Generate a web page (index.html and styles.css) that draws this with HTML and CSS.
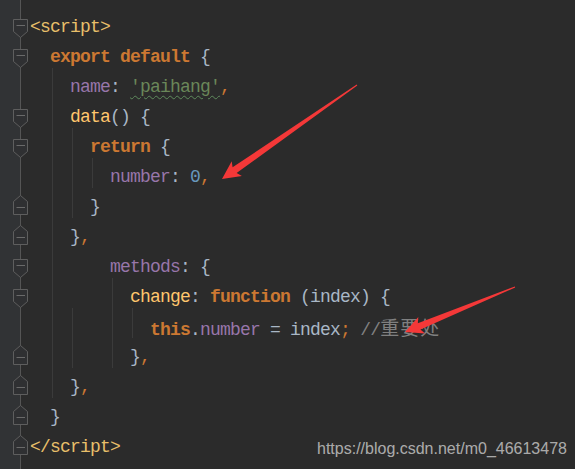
FILE: index.html
```html
<!DOCTYPE html>
<html>
<head>
<meta charset="utf-8">
<link rel="stylesheet" href="styles.css">
</head>
<body>
<div class="editor">
  <div class="gutter">
    <div class="grow"><svg class="fold" viewBox="0 0 30 30"><polygon points="13.5,7.5 27.5,7.5 27.5,19.5 20.5,25.5 13.5,19.5"/><line x1="16.5" y1="13.5" x2="25" y2="13.5"/></svg></div>
    <div class="grow"><svg class="fold" viewBox="0 0 30 30"><polygon points="13.5,7.5 27.5,7.5 27.5,19.5 20.5,25.5 13.5,19.5"/><line x1="16.5" y1="13.5" x2="25" y2="13.5"/></svg></div>
    <div class="grow"></div>
    <div class="grow"><svg class="fold" viewBox="0 0 30 30"><polygon points="13.5,7.5 27.5,7.5 27.5,19.5 20.5,25.5 13.5,19.5"/><line x1="16.5" y1="13.5" x2="25" y2="13.5"/></svg></div>
    <div class="grow"><svg class="fold" viewBox="0 0 30 30"><polygon points="13.5,7.5 27.5,7.5 27.5,19.5 20.5,25.5 13.5,19.5"/><line x1="16.5" y1="13.5" x2="25" y2="13.5"/></svg></div>
    <div class="grow"></div>
    <div class="grow"><svg class="fold" viewBox="0 0 30 30"><polygon points="20.5,3.5 27.5,9.5 27.5,22.5 13.5,22.5 13.5,9.5"/><line x1="16.5" y1="15.5" x2="25" y2="15.5"/></svg></div>
    <div class="grow"><svg class="fold" viewBox="0 0 30 30"><polygon points="20.5,3.5 27.5,9.5 27.5,22.5 13.5,22.5 13.5,9.5"/><line x1="16.5" y1="15.5" x2="25" y2="15.5"/></svg></div>
    <div class="grow"><svg class="fold" viewBox="0 0 30 30"><polygon points="13.5,7.5 27.5,7.5 27.5,19.5 20.5,25.5 13.5,19.5"/><line x1="16.5" y1="13.5" x2="25" y2="13.5"/></svg></div>
    <div class="grow"><svg class="fold" viewBox="0 0 30 30"><polygon points="13.5,7.5 27.5,7.5 27.5,19.5 20.5,25.5 13.5,19.5"/><line x1="16.5" y1="13.5" x2="25" y2="13.5"/></svg></div>
    <div class="grow"></div>
    <div class="grow"><svg class="fold" viewBox="0 0 30 30"><polygon points="20.5,3.5 27.5,9.5 27.5,22.5 13.5,22.5 13.5,9.5"/><line x1="16.5" y1="15.5" x2="25" y2="15.5"/></svg></div>
    <div class="grow"><svg class="fold" viewBox="0 0 30 30"><polygon points="20.5,3.5 27.5,9.5 27.5,22.5 13.5,22.5 13.5,9.5"/><line x1="16.5" y1="15.5" x2="25" y2="15.5"/></svg></div>
    <div class="grow"><svg class="fold" viewBox="0 0 30 30"><polygon points="20.5,3.5 27.5,9.5 27.5,22.5 13.5,22.5 13.5,9.5"/><line x1="16.5" y1="15.5" x2="25" y2="15.5"/></svg></div>
    <div class="grow"><svg class="fold" viewBox="0 0 30 30"><polygon points="20.5,3.5 27.5,9.5 27.5,22.5 13.5,22.5 13.5,9.5"/><line x1="16.5" y1="15.5" x2="25" y2="15.5"/></svg></div>
  </div>
  <div class="code">
    <svg class="guides" width="545" height="469" viewBox="0 0 545 469">
      <line x1="22.5" y1="68" x2="22.5" y2="398"/>
      <line x1="42.5" y1="128" x2="42.5" y2="218"/>
      <line x1="42.5" y1="308" x2="42.5" y2="368"/>
      <line x1="62.5" y1="158" x2="62.5" y2="188"/>
      <line x1="82.5" y1="278" x2="82.5" y2="368"/>
      <line x1="102.5" y1="308" x2="102.5" y2="338"/>
    </svg>
<div class="line"><span class="tag">&lt;script&gt;</span></div>
<div class="line">  <span class="kw">export default</span> <span class="br">{</span></div>
<div class="line">    <span class="prop">name</span><span class="br">: </span><span class="str">'paihang'</span><span class="kw2">,</span></div>
<div class="line">    <span class="fn">data</span><span class="br">() {</span></div>
<div class="line">      <span class="kw">return</span> <span class="br">{</span></div>
<div class="line">        <span class="prop">number</span><span class="br">: </span><span class="num">0</span><span class="kw2">,</span></div>
<div class="line">      <span class="br">}</span></div>
<div class="line">    <span class="br">}</span><span class="kw2">,</span></div>
<div class="line">        <span class="prop">methods</span><span class="br">: {</span></div>
<div class="line">          <span class="fn">change</span><span class="br">: </span><span class="kw">function</span> <span class="br">(index) {</span></div>
<div class="line">            <span class="kw">this</span><span class="br">.</span><span class="prop">number</span><span class="br"> = index</span><span class="kw2">;</span> <span class="cmt">//<span class="cjk">重要处</span></span></div>
<div class="line">          <span class="br">}</span><span class="kw2">,</span></div>
<div class="line">    <span class="br">}</span><span class="kw2">,</span></div>
<div class="line">  <span class="br">}</span></div>
<div class="line"><span class="tag">&lt;/script&gt;</span></div>
  </div>
</div>
<svg class="arrows" width="575" height="469" viewBox="0 0 575 469">
  <polygon points="222,179 231.7,161.3 232.6,167.3 356.7,84.6 357.3,85.4 236.6,173.1 241.9,176.1"/>
  <polygon points="405,332 418.3,316.9 417.8,323.2 514.8,286.5 515.2,287.5 420.4,329.6 425.1,333.5"/>
</svg>
<div class="watermark">https://blog.csdn.net/m0_46613478</div>
</body>
</html>
```
FILE: styles.css
```css
html, body {
  margin: 0;
  padding: 0;
  background: #2b2b2b;
}
body {
  position: relative;
  width: 575px;
  height: 469px;
  overflow: hidden;
}
.editor {
  display: flex;
  height: 469px;
  background: #2b2b2b;
}
.gutter {
  width: 30px;
  flex: none;
  padding-top: 12px;
  box-sizing: border-box;
  background: linear-gradient(to right, #313335 0, #313335 20px, #555555 20px, #555555 21px, #2b2b2b 21px);
}
.grow {
  height: 30px;
}
.fold {
  display: block;
  width: 30px;
  height: 30px;
}
.fold polygon {
  fill: #2f3032;
  stroke: #5e5e5e;
  stroke-width: 1;
}
.fold line {
  stroke: #6a6a6a;
  stroke-width: 1;
}
.code {
  position: relative;
  flex: 1;
  padding-top: 12px;
  font-family: "Liberation Mono", monospace;
  font-size: 18px;
  letter-spacing: -0.8px;
  color: #a9b7c6;
}
.guides {
  position: absolute;
  left: 0;
  top: 0;
}
.guides line {
  stroke: #3b3b3b;
  stroke-width: 1;
}
.line {
  position: relative;
  height: 30px;
  line-height: 30px;
  white-space: pre;
}
.tag { color: #e8bf6a; }
.kw { color: #cc7832; font-weight: bold; }
.kw2 { color: #cc7832; }
.br { color: #a9b7c6; }
.prop { color: #9876aa; }
.str {
  color: #6a8759;
  text-decoration: underline wavy #5e8a5c;
  text-decoration-thickness: 1px;
  text-underline-offset: 3px;
}
.num { color: #6897bb; }
.fn { color: #ffc66d; }
.cmt { color: #808080; }
.cjk {
  font-family: "Noto Sans CJK SC", sans-serif;
  font-size: 19px;
  letter-spacing: 1px;
}
.arrows {
  position: absolute;
  left: 0;
  top: 0;
}
.arrows polygon {
  fill: #f43838;
}
.watermark {
  position: absolute;
  left: 317px;
  top: 440px;
  font-family: "Liberation Sans", Arial, sans-serif;
  font-size: 16px;
  color: rgba(255, 255, 255, 0.62);
  white-space: nowrap;
}
```
